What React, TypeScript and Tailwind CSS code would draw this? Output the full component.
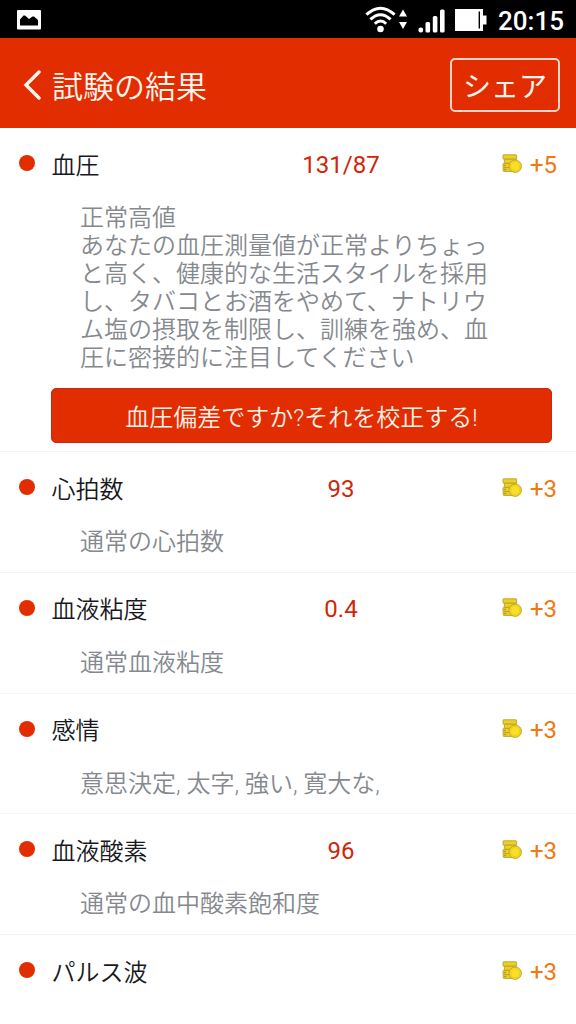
import React from "react";
import clsx from "clsx";

interface TestResult {
  name: string;
  value?: string;
  points: number;
  description?: string;
  action?: string;
}

const results: TestResult[] = [
  {
    name: "血圧",
    value: "131/87",
    points: 5,
    description:
      "正常高値\nあなたの血圧測量値が正常よりちょっ\nと高く、健康的な生活スタイルを採用\nし、タバコとお酒をやめて、ナトリウ\nム塩の摂取を制限し、訓練を強め、血\n圧に密接的に注目してください",
    action: "血圧偏差ですか?それを校正する!",
  },
  { name: "心拍数", value: "93", points: 3, description: "通常の心拍数" },
  { name: "血液粘度", value: "0.4", points: 3, description: "通常血液粘度" },
  { name: "感情", points: 3, description: "意思決定, 太字, 強い, 寛大な," },
  { name: "血液酸素", value: "96", points: 3, description: "通常の血中酸素飽和度" },
  { name: "パルス波", points: 3 },
];

const CoinsIcon: React.FC = () => (
  <svg width="20" height="20" viewBox="0 0 20 20" className="shrink-0">
    <g fill="#ecd023" stroke="#b9a02c" strokeWidth="0.9">
      <rect x="1" y="0.8" width="13.6" height="4.4" rx="0.6" />
      <rect x="2.4" y="5.2" width="12" height="4.2" rx="0.6" />
      <rect x="1" y="9.4" width="11" height="4.2" rx="0.6" />
      <rect x="1.2" y="13.6" width="11" height="3.8" rx="0.6" />
    </g>
    <path d="M2 11.5h2M2 15.5h2.4" stroke="#b9a02c" strokeWidth="1.4" />
    <circle cx="13.2" cy="12.2" r="6.2" fill="#f3d922" stroke="#c4a820" strokeWidth="1" />
    <circle cx="13.2" cy="12.2" r="4.4" fill="#f8e02a" stroke="#e8cc20" strokeWidth="0.8" />
  </svg>
);

const StatusBar: React.FC = () => (
  <div className="flex h-[38px] items-center justify-between bg-black pl-[17px] pr-3 text-white">
    <svg width="24" height="20" viewBox="0 0 24 20" className="mt-px">
      <rect width="24" height="19.5" rx="1" fill="#fff" />
      <path d="M3 15.5V9.5L6.5 5.5h1.5L12 9l3.5-2.5h1.5l4 3.5v5.5z" fill="#000" />
    </svg>
    <div className="flex items-center">
      {/* Wifi */}
      <svg width="44" height="28" viewBox="0 0 44 28" className="mr-[9px]">
        <g fill="none" stroke="#fff" strokeWidth="3">
          <path d="M1.4 9.7Q15.5-3.3 29.6 9.7" />
          <path d="M5.4 14.4Q15.5 5 25.6 14.4" />
          <path d="M9.8 18.8Q15.5 13.2 21.2 18.8" />
        </g>
        <circle cx="15.5" cy="24" r="3.3" fill="#fff" />
        <path d="M34 11.5l4-7 4 7zM34 17h8l-4 7z" fill="#fff" />
      </svg>
      {/* Signal */}
      <svg width="28" height="26" viewBox="0 0 28 26" className="mr-[9px] mt-0.5">
        <g fill="#fff">
          <rect x="0.5" y="20.5" width="4.6" height="5" rx="2" />
          <rect x="7.5" y="15" width="4.6" height="10.5" rx="1.5" />
          <rect x="14.8" y="9" width="4.6" height="16.5" rx="1.5" />
          <rect x="22" y="2.5" width="4.6" height="23" rx="1.5" />
        </g>
      </svg>
      {/* Battery */}
      <svg width="32" height="24" viewBox="0 0 32 24" className="mr-[11px] mt-0.5">
        <path d="M0 1h28v6.5h3.5v9H28V23H0z" fill="#fff" />
        <path d="M24.3 3.5v17" stroke="#000" strokeWidth="1.4" />
      </svg>
      <span className="mt-[3px] font-[Roboto] text-[26px] font-medium leading-none">20:15</span>
    </div>
  </div>
);

const ResultItem: React.FC<{ result: TestResult; first: boolean }> = ({ result, first }) => (
  <section className={clsx("pl-[19px]", first ? "h-[323px]" : "h-[120.8px] border-t border-[#f3f4f5]")}>
    <div className="flex h-[73px] items-center pr-[19px]">
      <span className="mb-[3px] mr-4 h-4 w-4 shrink-0 rounded-full bg-[#e12d00]" />
      <span className="mt-0.5 w-[220px] pl-[0.5px] text-[24px] leading-7 text-[#17191c]">{result.name}</span>
      <span className="w-[140px] text-center font-[Roboto] text-[24px] font-normal leading-7 text-[#cf2608]">
        {result.value}
      </span>
      <div className="ml-auto flex items-center gap-2">
        <div className="mb-0.5">
          <CoinsIcon />
        </div>
        <span className="font-[Roboto] text-[24px] font-normal leading-7 text-[#f07810]">
          +{result.points}
        </span>
      </div>
    </div>
    {result.description && (
      <p className="ml-[61px] mt-[3px] whitespace-pre text-[24px] leading-7 text-[#85898e]">
        {result.description}
      </p>
    )}
    {result.action && (
      <button className="ml-8 mt-4 block h-[55px] w-[501px] rounded-[5px] border border-[#c52a16] bg-[#e12d00] pt-[5px] text-[24px] leading-7 text-[#fff0e8]">
        {result.action}
      </button>
    )}
  </section>
);

const App: React.FC = () => {
  return (
    <div className="h-[1024px] w-[576px] overflow-hidden bg-white font-[Roboto,'Noto_Sans_CJK_JP',sans-serif] font-[350]">
      <StatusBar />

      {/* Header */}
      <header className="flex h-[90px] items-center justify-between bg-[#e12d00] pl-[23px] pr-4 text-[#fff5ef]">
        <div className="flex items-center">
          <svg width="18" height="30" viewBox="0 0 18 30" className="mr-[11px] mt-1">
            <path d="M16 2L3 15l13 13" fill="none" stroke="currentColor" strokeWidth="3.4" strokeLinecap="round" />
          </svg>
          <h1 className="mt-[9px] text-[31px] leading-9">試験の結果</h1>
        </div>
        <button className="mt-[3px] h-[54px] w-[110px] rounded-[5px] border-2 border-[#ffd5c8] pt-[6px] text-[28px] font-normal leading-8">
          シェア
        </button>
      </header>

      {/* Results */}
      <main>
        {results.map((result, index) => (
          <ResultItem key={result.name} result={result} first={index === 0} />
        ))}
      </main>
    </div>
  );
};

export default App;
